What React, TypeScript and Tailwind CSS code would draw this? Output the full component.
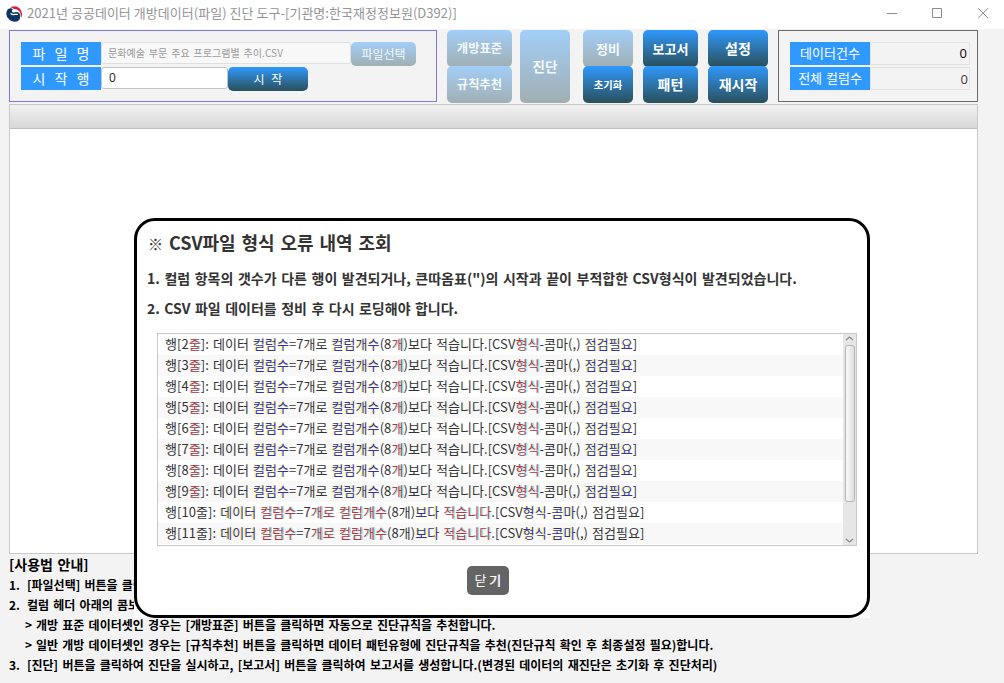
import type { ReactNode } from "react";
import clsx from "clsx";

const YELLOW = "text-[#3030b0] [text-shadow:-1px_0_0_#fafa30]";
const CYAN = "text-[#c43038] [text-shadow:1px_0_0_#50f4f4]";

function Y({ children }: { children: ReactNode }) {
  return <span className={YELLOW}>{children}</span>;
}

function C({ children }: { children: ReactNode }) {
  return <span className={CYAN}>{children}</span>;
}

function Logo() {
  return (
    <svg width="17" height="17" viewBox="0 0 17 17" className="shrink-0">
      <path d="M3.400 2.700A8 8 0 0 1 15 13.200C15.200 9.800 14.600 6.200 11.300 4.700 9.300 3.800 8.200 4.600 6.800 3.200 5.800 2.300 4.600 2.300 3.400 2.700z" fill="#d8203c" />
      <path d="M1.200 5.200C2.200 3.200 5.200 2.400 6.800 4 5 6.300 6.600 8.200 9 7.200 11.400 6.200 14.200 7.600 14.300 10.400 14.300 11.900 14 13.100 13.300 14.900A8 8 0 0 1 1.200 5.200z" fill="#0d3562" />
      <path d="M5 8.600c1.600 2.200 4.400.2 6.400.8" fill="none" stroke="#fff" strokeWidth="1.300" strokeLinecap="round" />
    </svg>
  );
}

function TitleBar() {
  return (
    <header className="flex h-[29px] items-start bg-white pl-[6px] text-[#949494]">
      <div className="flex h-[26px] items-center gap-1">
        <Logo />
        <h1 className="-mt-px text-[13px] leading-[26px] tracking-[0.03px] whitespace-nowrap">
          2021년 공공데이터 개방데이터(파일) 진단 도구-[기관명:한국재정정보원(D392)]
        </h1>
      </div>
      <svg width="102" height="11" viewBox="0 0 102 11" className="mt-2 mr-[15px] ml-auto" fill="none" stroke="#8c8c8c">
        <path d="M0 5.500h10" />
        <path d="M45.500.5h9v9h-9z" />
        <path d="M91.300.3l9.700 9.700M101 .3l-9.700 9.700" />
      </svg>
    </header>
  );
}

type BtnProps = { children: ReactNode; className: string; disabled?: boolean };

function GradientButton({ children, className, disabled }: BtnProps) {
  return (
    <button
      type="button"
      disabled={disabled}
      className={clsx(
        "flex items-center justify-center rounded-[5px] bg-linear-to-b whitespace-nowrap",
        disabled ? "from-[#a2cef8] to-[#a0afb3] text-[#f4f8fa]" : "from-[#2e99ff] to-[#294f5b] text-white",
        className,
      )}
    >
      {children}
    </button>
  );
}

function FieldLabel({ children, className }: { children: ReactNode; className?: string }) {
  return (
    <div className={clsx("flex h-[23px] w-20 shrink-0 items-center justify-center bg-[#3099ff] whitespace-nowrap text-white", className)}>
      {children}
    </div>
  );
}

function Toolbar() {
  return (
    <div className="flex h-[74px] items-start pt-px pl-[9px]">
      <section className="flex h-[72px] w-[428px] flex-col gap-[2px] border border-[#7878f0] pt-[11px] pl-[11px]">
        <div className="flex h-[23px]">
          <FieldLabel className="text-[14px] [word-spacing:6px]">파 일 명</FieldLabel>
          <div className="h-[22px] w-[250px] rounded-[3px] border border-[#dfdfdf] bg-[#f8f8f8] pl-[6px] text-[10px] leading-[20px] tracking-[0.060px] whitespace-nowrap text-[#9a9a9a] [word-spacing:1.500px]">
            문화예술 부문 주요 프로그램별 추이.CSV
          </div>
          <GradientButton disabled className="h-6 w-[65px] text-[12px]">파일선택</GradientButton>
        </div>
        <div className="flex h-[23px]">
          <FieldLabel className="text-[14px] [word-spacing:6px]">시 작 행</FieldLabel>
          <div className="h-[22px] w-[127px] rounded-[3px] border border-[#c4c4c4] bg-white pl-[7px] font-['Open_Sans','Noto_Sans',sans-serif] text-[12px] leading-[20px] text-[#222]">
            0
          </div>
          <GradientButton className="h-6 w-20 text-[12px] [word-spacing:4px]">시 작</GradientButton>
        </div>
      </section>

      <div className="flex pl-[10px] font-bold">
        <div className="w-[65px]">
          <GradientButton disabled className="h-[37px] w-full text-[12.300px]">개방표준</GradientButton>
          <GradientButton disabled className="-mt-px h-[37px] w-full text-[12.300px]">규칙추천</GradientButton>
        </div>
        <GradientButton disabled className="ml-2 h-[73px] w-[50px] text-[13.500px]">진단</GradientButton>
        <div className="ml-[13px] w-[50px]">
          <GradientButton disabled className="h-[37px] w-full text-[13px]">정비</GradientButton>
          <GradientButton className="-mt-px h-[37px] w-full text-[10.300px]">초기화</GradientButton>
        </div>
        <div className="ml-[10px] w-[55px]">
          <GradientButton className="h-[37px] w-full text-[13px]">보고서</GradientButton>
          <GradientButton className="-mt-px h-[37px] w-full text-[14px]">패턴</GradientButton>
        </div>
        <div className="ml-[10px] w-[60px]">
          <GradientButton className="h-[37px] w-full text-[14px]">설정</GradientButton>
          <GradientButton className="-mt-px h-[37px] w-full text-[14px]">재시작</GradientButton>
        </div>
      </div>

      <section className="ml-[10px] flex h-[72px] w-[200px] flex-col gap-[2px] border border-[#6a6a6a] pt-[11px] pl-[11px]">
        <div className="flex">
          <FieldLabel className="pb-[2px] text-[13px]">데이터건수</FieldLabel>
          <div className="h-[23px] w-[100px] border border-[#e2e2e2] pr-[2px] text-right font-['Open_Sans','Noto_Sans',sans-serif] text-[13px] leading-[21px] text-black">0</div>
        </div>
        <div className="flex">
          <FieldLabel className="pb-[2px] text-[13px] [word-spacing:1px]">전체 컬럼수</FieldLabel>
          <div className="h-[23px] w-[100px] border border-[#e2e2e2] pr-px text-right font-['Open_Sans','Noto_Sans',sans-serif] text-[13px] leading-[23px] text-[#4c3840]">0</div>
        </div>
      </section>
    </div>
  );
}

function ErrorRow({ line }: { line: number }) {
  return (
    <li className="h-[21px] pl-[7px] leading-[19px] whitespace-nowrap odd:bg-white even:bg-[#f8f8f8]">
      {line < 10 ? (
        <>
          행[{line}<C>줄</C>]: 데이터 <Y>컬럼수</Y>=7개로 <Y>컬럼개수</Y>(8<C>개</C>)보다 적습니다.[CSV<C>형식</C>-콤마(,) <Y>점검필요</Y>]
        </>
      ) : (
        <>
          행[{line}줄]: <Y>데이터</Y> <C>컬럼수</C>=7<C>개로</C> <C>컬럼개수</C>(8개)<Y>보다</Y> <C>적습니다</C>.[CSV<Y>형식</Y>-<Y>콤마</Y>(,) 점검필요]
        </>
      )}
    </li>
  );
}

function Scrollbar() {
  return (
    <div className="flex w-[13px] shrink-0 flex-col items-center bg-[#e6e6e6]">
      <svg width="13" height="11" viewBox="0 0 13 11" fill="none" stroke="#8c8c8c" strokeWidth="1.300">
        <path d="M3 6l3.500-3 3.500 3" />
      </svg>
      <div className="h-[157px] w-[10px] rounded-[3px] border border-[#b4b4b4] bg-linear-to-r from-[#fafafa] to-[#dedede]" />
      <svg width="13" height="11" viewBox="0 0 13 11" className="mt-auto" fill="none" stroke="#8c8c8c" strokeWidth="1.300">
        <path d="M3 5l3.500 3L10 5" />
      </svg>
    </div>
  );
}

const LINES = [2, 3, 4, 5, 6, 7, 8, 9, 10, 11];

function ErrorDialog() {
  return (
    <div role="dialog" className="absolute top-[218px] left-[134px] h-[400px] w-[736px] bg-white">
      <div className="flex h-full flex-col rounded-[21px] border-[3px] border-black text-[#333]">
        <h2 className="mt-[7px] h-[30px] pl-[11px] text-[18px] leading-7 font-bold whitespace-nowrap [word-spacing:1.800px]">
          <span className="text-[15px]">※</span> CSV파일 형식 오류 내역 조회
        </h2>
        <p className="mt-[9px] h-[30px] pl-[10px] text-[14px] leading-[23px] font-bold whitespace-nowrap [word-spacing:1.400px]">
          1. 컬럼 항목의 갯수가 다른 행이 발견되거나, 큰따옴표(")의 시작과 끝이 부적합한 CSV형식이 발견되었습니다.
        </p>
        <p className="h-[30px] pl-[10px] text-[14px] leading-[23px] font-bold whitespace-nowrap [word-spacing:1.300px]">
          2. CSV 파일 데이터를 정비 후 다시 로딩해야 합니다.
        </p>
        <div className="mt-[6px] ml-5 flex h-[213px] w-[700px] overflow-hidden border border-[#c8c8c8]">
          <ul className="flex-1 text-[13px] tracking-[0.060px] [word-spacing:1px]">
            {LINES.map((n) => (
              <ErrorRow key={n} line={n} />
            ))}
          </ul>
          <Scrollbar />
        </div>
        <button type="button" className="mt-5 ml-[330px] h-[29px] w-[42px] rounded-[5px] bg-[#646464] pb-[2px] text-[13px] leading-[27px] text-white">
          닫 <span className="[text-shadow:1px_0_0_#5050e0,-1px_0_0_#d8d850]">기</span>
        </button>
      </div>
    </div>
  );
}

function Guide() {
  return (
    <footer className="-mt-px pl-[9px] text-[12px] leading-5 font-bold whitespace-nowrap text-black [word-spacing:1.500px]">
      <h3 className="h-[22px] text-[14px] leading-[23px]">[사용법 안내]</h3>
      <div className="flex"><span className="w-[18px]">1.</span>[파일선택] 버튼을 클릭</div>
      <div className="flex"><span className="w-[18px]">2.</span>컬럼 헤더 아래의 콤보</div>
      <div className="flex pl-4"><span className="w-[11px]">&gt;</span>개방 표준 데이터셋인 경우는 [개방표준] 버튼을 클릭하면 자동으로 진단규칙을 추천합니다.</div>
      <div className="flex pl-4"><span className="w-[11px]">&gt;</span>일반 개방 데이터셋인 경우는 [규칙추천] 버튼을 클릭하면 데이터 패턴유형에 진단규칙을 추천(진단규칙 확인 후 최종설정 필요)합니다.</div>
      <div className="flex"><span className="w-[18px]">3.</span>[진단] 버튼을 클릭하여 진단을 실시하고, [보고서] 버튼을 클릭하여 보고서를 생성합니다.(변경된 데이터의 재진단은 초기화 후 진단처리)</div>
    </footer>
  );
}

export default function App() {
  return (
    <div className="relative h-[683px] w-[1004px] overflow-hidden bg-[#f3f3f3] font-['Noto_Sans_CJK_KR',sans-serif]">
      <TitleBar />
      <Toolbar />
      <main className="mt-px ml-[9px] h-[450px] w-[969px] border border-[#c8c8c8] bg-white">
        <div className="h-6 border-b border-[#c0c0c0] bg-linear-to-b from-[#f2f2f2] to-[#d8d8d8]" />
      </main>
      <Guide />
      <ErrorDialog />
    </div>
  );
}
